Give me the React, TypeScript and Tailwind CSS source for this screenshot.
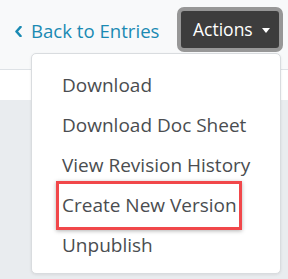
const items = [
  "Download",
  "Download Doc Sheet",
  "View Revision History",
  "Create New Version",
  "Unpublish",
];

export default function App() {
  return (
    <div
      className="relative w-[288px] h-[279px] overflow-hidden bg-[#e9ecef]"
      style={{ fontFamily: '"Open Sans", "Noto Sans", sans-serif' }}
    >
      <div className="h-[70px] bg-[#f8f9fa] border-b border-[#dee2e6] flex items-start pt-[7px] pl-[15px] pr-[5px] justify-between">
        <a className="flex items-center gap-[9px] mt-[11px] text-[#1a8ab3] text-[18.6px] leading-[26px]">
          <svg width="7" height="11" viewBox="0 0 7 11" className="mt-[1px]">
            <polyline
              points="5.5,1 1.5,5.5 5.5,10"
              fill="none"
              stroke="currentColor"
              strokeWidth="2.6"
              strokeLinecap="round"
              strokeLinejoin="round"
            />
          </svg>
          <span>Back to Entries</span>
        </a>
        <button
          type="button"
          className="flex items-center gap-[9px] h-[45px] w-[106px] pl-[12px] rounded-[7px] border-[4px] border-[#979797] bg-[#3d3d3d] text-white text-[17.5px]"
        >
          <span>Actions</span>
          <span className="mt-[1px] w-0 h-0 border-l-[4px] border-r-[4px] border-t-[5px] border-l-transparent border-r-transparent border-t-white" />
        </button>
      </div>
      <div className="h-[30px] bg-white" />

      <div className="absolute left-[31px] top-[53px] w-[250px] h-[221px] bg-white border border-[#d9dcdf] rounded-[5px] shadow-[0_1px_3px_rgba(0,0,0,0.08)] pt-[11px]">
        {items.map((item) => (
          <div
            key={item}
            className="h-[40px] flex items-center pl-[30px] text-[19px] text-[#4a4d50]"
          >
            {item}
          </div>
        ))}
      </div>

      <div className="absolute left-[56px] top-[181px] w-[186px] h-[49px] border-[3px] border-[#f1474a] shadow-[0_1px_4px_rgba(0,0,0,0.3)]" />
    </div>
  );
}
